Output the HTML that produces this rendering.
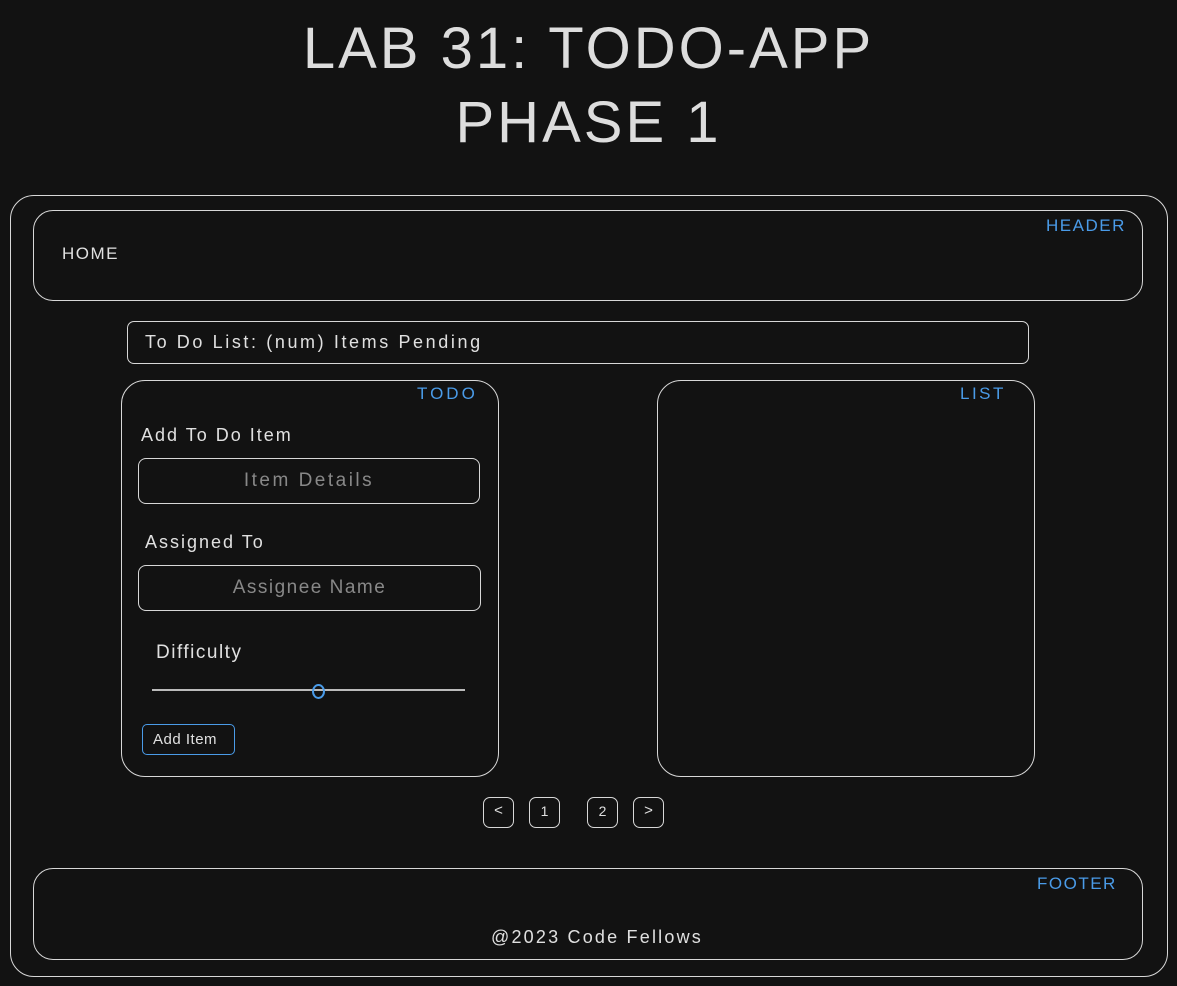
<!DOCTYPE html>
<html><head><meta charset="utf-8"><style>
body{margin:0;width:1177px;height:986px;background:#121212;position:relative;overflow:hidden;font-family:"Comic Sans MS","Liberation Sans",sans-serif;color:#e0e0e0}
.b{position:absolute;border:1.5px solid #d8d8d8;box-sizing:border-box}
.t{position:absolute;white-space:nowrap;letter-spacing:1.5px}
.blue{color:#4a9be8}
</style></head><body>
<div class="t" style="left:0;width:1177px;text-align:center;top:12px;font-size:58px;line-height:74px;letter-spacing:3px;color:#ddd">LAB 31: TODO-APP<br>PHASE 1</div>
<div class="b" style="left:10px;top:195px;width:1158px;height:782px;border-radius:24px"></div>
<div class="b" style="left:33px;top:210px;width:1110px;height:91px;border-radius:20px"></div>
<div class="t blue" style="left:1046px;top:216px;font-size:17px">HEADER</div>
<div class="t" style="left:62px;top:244px;font-size:17px">HOME</div>
<div class="b" style="left:127px;top:321px;width:902px;height:43px;border-radius:7px"></div>
<div class="t" style="left:145px;top:332px;font-size:18px;letter-spacing:2.6px">To Do List: (num) Items Pending</div>
<div class="b" style="left:121px;top:380px;width:378px;height:397px;border-radius:24px"></div>
<div class="t blue" style="left:417px;top:384px;font-size:17px;letter-spacing:3px">TODO</div>
<div class="t" style="left:141px;top:425px;font-size:18px;letter-spacing:2px">Add To Do Item</div>
<div class="b" style="left:138px;top:458px;width:342px;height:46px;border-radius:8px"></div>
<div class="t" style="left:138px;width:342px;text-align:center;top:470px;font-size:19px;color:#888;letter-spacing:2.5px">Item Details</div>
<div class="t" style="left:145px;top:532px;font-size:18px;letter-spacing:2px">Assigned To</div>
<div class="b" style="left:138px;top:565px;width:343px;height:46px;border-radius:8px"></div>
<div class="t" style="left:138px;width:343px;text-align:center;top:577px;font-size:19px;color:#888;letter-spacing:1.5px">Assignee Name</div>
<div class="t" style="left:156px;top:642px;font-size:19px">Difficulty</div>
<div style="position:absolute;left:152px;top:689px;width:313px;height:2px;background:#bbb"></div>
<div style="position:absolute;left:312px;top:684px;width:9px;height:11px;border:2px solid #4a9be8;border-radius:50%"></div>
<div class="b" style="left:142px;top:724px;width:93px;height:31px;border-radius:5px;border-color:#4a9be8"></div>
<div class="t" style="left:153px;top:731px;font-size:15px;letter-spacing:0.5px">Add Item</div>
<div class="b" style="left:657px;top:380px;width:378px;height:397px;border-radius:24px"></div>
<div class="t blue" style="left:960px;top:384px;font-size:17px;letter-spacing:2.5px">LIST</div>
<div class="b" style="left:483px;top:797px;width:31px;height:31px;border-radius:7px"></div>
<div class="t" style="left:483px;width:31px;text-align:center;top:802px;font-size:15px;letter-spacing:0">&lt;</div>
<div class="b" style="left:529px;top:797px;width:31px;height:31px;border-radius:7px"></div>
<div class="t" style="left:529px;width:31px;text-align:center;top:803px;font-size:14px;letter-spacing:0">1</div>
<div class="b" style="left:587px;top:797px;width:31px;height:31px;border-radius:7px"></div>
<div class="t" style="left:587px;width:31px;text-align:center;top:803px;font-size:14px;letter-spacing:0">2</div>
<div class="b" style="left:633px;top:797px;width:31px;height:31px;border-radius:7px"></div>
<div class="t" style="left:633px;width:31px;text-align:center;top:802px;font-size:15px;letter-spacing:0">&gt;</div>
<div class="b" style="left:33px;top:868px;width:1110px;height:92px;border-radius:20px"></div>
<div class="t blue" style="left:1037px;top:874px;font-size:17px">FOOTER</div>
<div class="t" style="left:491px;top:927px;font-size:18px;letter-spacing:2.2px">@2023 Code Fellows</div>
</body></html>
